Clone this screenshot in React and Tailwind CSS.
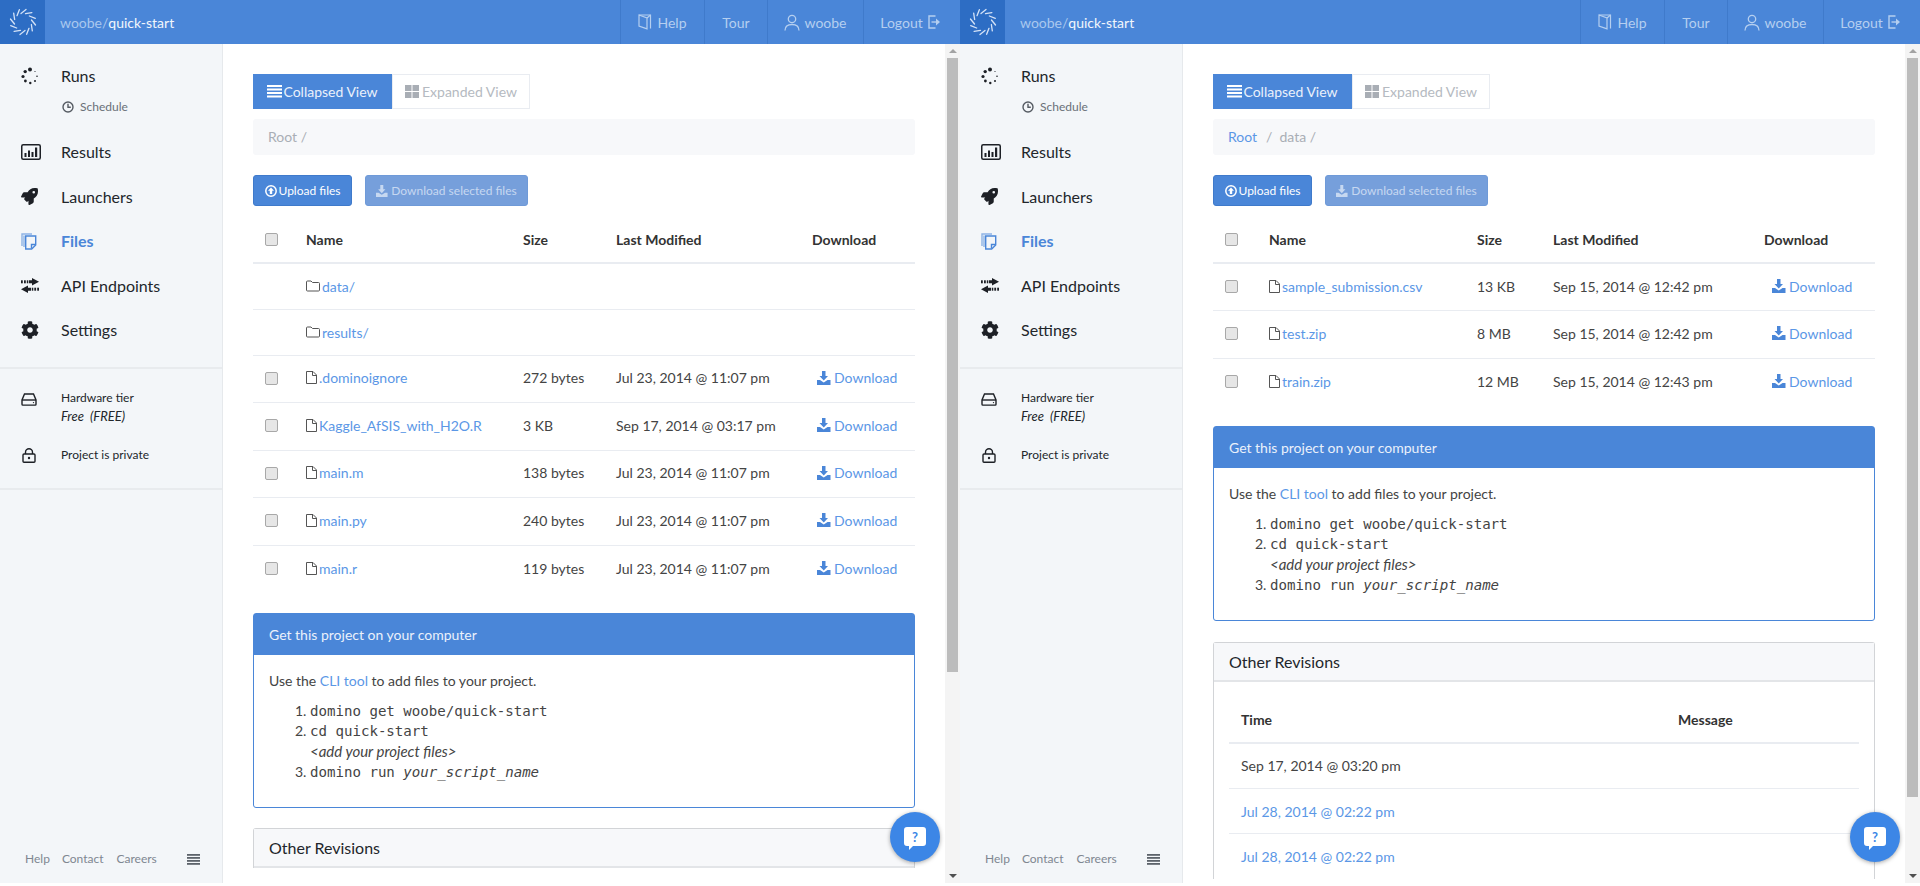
import React from "react";
import { FaRocket, FaCog } from "react-icons/fa";

const Logo = () => (
  <svg width="30" height="30" viewBox="-15 -15 30 30">
    {Array.from({ length: 12 }).map((_, i) => (
      <line key={i} x1="-2" y1="-8.5" x2="3" y2="-12.5" stroke="#d5e3f7" strokeWidth="1.3" strokeLinecap="round" transform={`rotate(${i * 30})`} />
    ))}
  </svg>
);

const Spinner = () => (
  <svg width="18" height="18" viewBox="-9 -9 18 18" fill="#1d2026">
    <circle cx="0" cy="-6.5" r="2" />
    <circle cx="-4.8" cy="-4.4" r="1.7" />
    <circle cx="-7" cy="0.5" r="1.6" />
    <circle cx="-4.6" cy="5" r="1.4" />
    <circle cx="0.3" cy="7" r="1.2" />
    <circle cx="5" cy="5" r="1" />
    <circle cx="7" cy="0.3" r="0.8" />
    <circle cx="5" cy="-4.5" r="0.6" />
  </svg>
);

const Chart = () => (
  <svg width="20" height="16" viewBox="0 0 20 16">
    <rect x="0.75" y="0.75" width="18.5" height="14.5" rx="1.5" fill="none" stroke="#1d2026" strokeWidth="1.5" />
    <rect x="3.5" y="9" width="2" height="4" fill="#1d2026" />
    <rect x="7" y="6.5" width="2" height="6.5" fill="#1d2026" />
    <rect x="10.5" y="8" width="2" height="5" fill="#1d2026" />
    <rect x="14" y="3.5" width="2.2" height="9.5" fill="#1d2026" />
  </svg>
);

const FilesIcon = () => (
  <svg width="16" height="17" viewBox="0 0 16 17" fill="none" stroke="#4a86d8" strokeWidth="1.4">
    <path d="M1 13V1h10" opacity="0.6" />
    <path d="M3 14V2.5" opacity="0.6" />
    <path d="M4.7 3h10v9l-4 4h-6z" />
    <path d="M10.5 15.5V11.5h4" />
  </svg>
);

const Exchange = () => (
  <svg width="18" height="15" viewBox="0 0 18 15" fill="#1d2026">
    <path d="M11 0 18 3.800l-7 3.800V5.300H8V2.300h3z" />
    <path d="M7 7.400 0 11.200l7 3.800v-2.300h3v-3H7z" />
    <rect x="0" y="2.300" width="1.800" height="3" />
    <rect x="3" y="2.300" width="1.800" height="3" />
    <rect x="5.800" y="2.300" width="1.500" height="3" />
    <rect x="10.800" y="9.700" width="1.500" height="3" />
    <rect x="13.300" y="9.700" width="1.800" height="3" />
    <rect x="16.200" y="9.700" width="1.800" height="3" />
  </svg>
);

const Hdd = () => (
  <svg width="16" height="13" viewBox="0 0 16 13" fill="none" stroke="#1d2026" strokeWidth="1.4">
    <path d="M3.500 1h9l2.500 6v4.300a.8.8 0 0 1-.8.8H1.800a.8.8 0 0 1-.8-.8V7z" />
    <path d="M1 7h14" />
    <circle cx="12.500" cy="9.600" r="0.700" fill="#1d2026" stroke="none" />
  </svg>
);

const Lock = () => (
  <svg width="14" height="15" viewBox="0 0 14 15" fill="none" stroke="#1d2026" strokeWidth="1.4">
    <rect x="1" y="6" width="12" height="8.300" rx="1" />
    <path d="M3.500 6V4.200a3.500 3.500 0 0 1 7 0V6" />
    <circle cx="7" cy="10" r="1.200" fill="#1d2026" stroke="none" />
  </svg>
);

const Clock = () => (
  <svg width="12" height="12" viewBox="0 0 12 12" fill="none" stroke="#555b63" strokeWidth="1.400">
    <circle cx="6" cy="6" r="5" />
    <path d="M6 2.800V6.300H8.800" />
  </svg>
);

const FileIcon = () => (
  <svg width="11" height="13" viewBox="0 0 11 13" fill="none" stroke="#555" strokeWidth="1" className="shrink-0">
    <path d="M.5.500h6.500l3.500 3.500v8.500h-10z" />
    <path d="M6.500.500v4h4" />
  </svg>
);

const FolderIcon = () => (
  <svg width="14" height="12" viewBox="0 0 14 12" fill="none" stroke="#555" strokeWidth="1" className="shrink-0">
    <path d="M1.500 1h3.500l1.500 1.500h6a1 1 0 0 1 1 1V10a1 1 0 0 1-1 1h-11a1 1 0 0 1-1-1V2a1 1 0 0 1 1-1z" />
  </svg>
);

const Tray = ({ color = "#4a86d8", w = 14 }) => (
  <svg width={w} height={w} viewBox="0 0 14 14" fill={color}>
    <path d="M5 0h3.500v5H11L6.750 9.500 2.500 5H5z" />
    <path d="M0 9h3l3.750 2.500L10.500 9H13.500v5H0z" />
  </svg>
);

const Upload = () => (
  <svg width="12" height="12" viewBox="0 0 12 12">
    <circle cx="6" cy="6" r="5.200" fill="none" stroke="#fff" strokeWidth="1.500" />
    <path d="M6 2.500 9 5.800H7.200V9H4.800V5.800H3z" fill="#fff" />
  </svg>
);

const ListIcon = () => (
  <svg width="15" height="13" viewBox="0 0 15 13" fill="#fff">
    <rect y="0" width="15" height="2" />
    <rect y="3.500" width="15" height="2" />
    <rect y="7" width="15" height="2" />
    <rect y="10.500" width="15" height="2" />
  </svg>
);

const GridIcon = () => (
  <svg width="14" height="13" viewBox="0 0 14 13" fill="#a9aeb5">
    <rect width="6.500" height="6" />
    <rect x="7.500" width="6.500" height="6" />
    <rect y="7" width="6.500" height="6" />
    <rect x="7.500" y="7" width="6.500" height="6" />
  </svg>
);

const Book = () => (
  <svg width="14" height="16" viewBox="0 0 14 16" fill="none" stroke="#b5cff0" strokeWidth="1.200">
    <path d="M1 1h11.500v13.500" />
    <path d="M1 1v11l8 2.800V4z" />
    <path d="M9 4l3.500-3" />
  </svg>
);

const User = () => (
  <svg width="16" height="17" viewBox="0 0 16 17" fill="none" stroke="#b5cff0" strokeWidth="1.300">
    <circle cx="8" cy="5" r="3.700" />
    <path d="M1 16.500c0-4 3-6 7-6s7 2 7 6" />
  </svg>
);

const LogoutIcon = () => (
  <svg width="13" height="14" viewBox="0 0 13 14" fill="none" stroke="#b5cff0" strokeWidth="1.400">
    <path d="M7.500 1H1v12h6.500" />
    <path d="M3.500 7h6" />
    <path d="M8 3.500 12 7l-4 3.500z" fill="#b5cff0" stroke="none" />
  </svg>
);

const Chat = () => (
  <svg width="22" height="23" viewBox="0 0 22 23">
    <path d="M3 0h16a3 3 0 0 1 3 3v13a3 3 0 0 1-3 3H9l-4 4v-4H3a3 3 0 0 1-3-3V3a3 3 0 0 1 3-3z" fill="#fff" />
    <text x="11" y="14.500" textAnchor="middle" fontSize="13" fontWeight="700" fill="#3c86e6" fontFamily="Lato">?</text>
  </svg>
);

const MenuIcon = () => (
  <svg width="13" height="11" viewBox="0 0 13 11" fill="#5c636b">
    <rect width="13" height="1.800" />
    <rect y="3" width="13" height="1.800" />
    <rect y="6" width="13" height="1.800" />
    <rect y="9" width="13" height="1.800" />
  </svg>
);

function Header() {
  return (
    <div className="h-[44px] shrink-0 bg-[#4a86d8] flex items-stretch text-[14px] text-[#b5cff0]">
      <div className="w-[45px] bg-[#2d6dc4] flex items-center justify-center"><Logo /></div>
      <div className="flex-1 pl-[15px] flex items-center text-[14px]">
        <span className="text-[#a9c8ee]">woobe/</span><span className="text-[#f2f6fc]">quick-start</span>
      </div>
      <div className="h-full w-[1px] bg-[#3f7acb]" />
      <div className="w-[83px] flex items-center justify-center gap-[5px]"><Book />Help</div>
      <div className="h-full w-[1px] bg-[#3f7acb]" />
      <div className="w-[62px] flex items-center justify-center">Tour</div>
      <div className="h-full w-[1px] bg-[#3f7acb]" />
      <div className="w-[95px] flex items-center justify-center gap-[4px]"><User />woobe</div>
      <div className="h-full w-[1px] bg-[#3f7acb]" />
      <div className="w-[96px] flex items-center justify-center gap-[5px] pr-[3px]">Logout<LogoutIcon /></div>
    </div>
  );
}

function NavItem({ icon, label, active, className = "" }) {
  return (
    <div className={`flex items-center h-[44.500px] ${className}`}>
      <div className="w-[61px] pl-[21px] flex items-center">{icon}</div>
      <span className={active ? "text-[16px] font-bold text-[#4a86d8]" : "text-[16px] text-[#22262b]"}>{label}</span>
    </div>
  );
}

function Sidebar() {
  return (
    <div className="w-[223px] shrink-0 bg-[#f3f6f9] border-r border-[#e6e9ec] flex flex-col">
      <div className="pt-[9.500px] border-b-2 border-[#e8ebee] h-[325px]">
        <NavItem icon={<Spinner />} label="Runs" />
        <div className="flex items-center h-[18px] pl-[62px] gap-[6px] text-[12px] text-[#6a7078]"><Clock />Schedule</div>
        <div className="h-[14px]" />
        <NavItem icon={<Chart />} label="Results" />
        <NavItem icon={<FaRocket size={17} color="#1d2026" />} label="Launchers" />
        <NavItem icon={<FilesIcon />} label="Files" active />
        <NavItem icon={<Exchange />} label="API Endpoints" />
        <NavItem icon={<FaCog size={18} color="#1d2026" />} label="Settings" />
      </div>
      <div className="h-[121px] border-b-2 border-[#e8ebee] pt-[20px] text-[12px] text-[#22262b]">
        <div className="flex">
          <div className="w-[61px] pl-[21px] pt-[4px]"><Hdd /></div>
          <div className="leading-[18px]">Hardware tier<br /><i className="text-[13px]">Free&nbsp; (FREE)</i></div>
        </div>
        <div className="flex mt-[20px]">
          <div className="w-[61px] pl-[22px] pt-[2px]"><Lock /></div>
          <div className="leading-[18px]">Project is private</div>
        </div>
      </div>
      <div className="flex-1 flex items-end pb-[15px] pl-[25px] text-[12px] text-[#7f8791]">
        <span>Help</span><span className="ml-[12px]">Contact</span><span className="ml-[13px]">Careers</span>
        <span className="ml-[30px] mb-[3px]"><MenuIcon /></span>
      </div>
    </div>
  );
}

function Scrollbar({ thumb }) {
  return (
    <div className="w-[15px] shrink-0 bg-[#f4f4f4] flex flex-col items-center">
      <div className="h-[14px] flex items-center justify-center w-full">
        <div className="w-0 h-0 border-x-[4px] border-x-transparent border-b-[4px] border-b-[#a3a3a3]" />
      </div>
      <div className="w-[11px] bg-[#bcbcbc]" style={{ height: thumb }} />
      <div className="flex-1" />
      <div className="h-[14px] flex items-center justify-center w-full">
        <div className="w-0 h-0 border-x-[4px] border-x-transparent border-t-[4px] border-t-[#505050]" />
      </div>
    </div>
  );
}

const Check = () => (
  <input type="checkbox" className="appearance-none block w-[13px] h-[13px] rounded-[2px] border border-[#a8a8a8] bg-[#e6e6e6]" />
);

function FileTable({ cols, rows, dlPad }) {
  return (
    <table className="w-full table-fixed border-collapse text-[14px] text-[#444]">
      <colgroup>{cols.map((c, i) => <col key={i} style={{ width: c }} />)}</colgroup>
      <thead>
        <tr className="h-[57px] border-b-2 border-[#e9ecf1] text-left text-[#333]">
          <th className="pl-[12px] pb-[16px] align-bottom font-normal"><Check /></th>
          <th className="pl-[13px] pb-[12px] align-bottom font-bold">Name</th>
          <th className="pl-[13px] pb-[12px] align-bottom font-bold">Size</th>
          <th className="pl-[13px] pb-[12px] align-bottom font-bold">Last Modified</th>
          <th className="pl-[13px] pb-[12px] align-bottom font-bold">Download</th>
        </tr>
      </thead>
      <tbody>
        {rows.map((r, i) => (
          <tr key={i} className={`${r.folder ? "h-[46px]" : "h-[47.500px]"} border-b border-[#e9ecf1] last:border-b-0`}>
            <td className={r.folder ? "pl-[12px]" : "pl-[12px] pb-[1px]"}>{!r.folder && <Check />}</td>
            <td className={r.folder ? "pl-[13px]" : "pl-[13px] pb-[2px]"}>
              <span className="flex items-center gap-[2px] text-[#5b97e6]">{r.folder ? <FolderIcon /> : <FileIcon />}<span className="whitespace-nowrap">{r.name}</span></span>
            </td>
            <td className="pl-[13px] pb-[2px] whitespace-nowrap">{r.size}</td>
            <td className="pl-[13px] pb-[2px] whitespace-nowrap">{r.date}</td>
            <td className="pb-[2px]" style={{ paddingLeft: dlPad }}>
              {!r.folder && <span className="flex items-center gap-[3px] text-[#5b97e6]"><Tray />Download</span>}
            </td>
          </tr>
        ))}
      </tbody>
    </table>
  );
}

function Toolbar({ crumbs }) {
  return (
    <>
      <div className="flex h-[35px] text-[14px]">
        <div className="w-[139px] bg-[#4a86d8] text-[#eaf1fb] flex items-center justify-center gap-[1px]"><ListIcon />Collapsed View</div>
        <div className="w-[138px] border border-[#e9ecf1] text-[#b5bac1] flex items-center justify-center gap-[3px]"><GridIcon />Expanded View</div>
      </div>
      <div className="mt-[10px] h-[36px] bg-[#f7f8fa] rounded-[3px] pl-[15px] pb-[1px] flex items-center text-[14px] text-[#a9aeb5]">{crumbs}</div>
      <div className="mt-[20px] flex gap-[13px] text-[12px]">
        <div className="w-[99px] h-[31px] rounded-[3px] bg-[#4a86d8] border border-[#3f7acb] text-white flex items-center justify-center gap-[2px]"><Upload />Upload files</div>
        <div className="w-[163px] h-[31px] rounded-[3px] bg-[#769fdb] border border-[#6f9ad8] text-[#c6d8f1] flex items-center justify-center gap-[3px]"><Tray color="#c6d8f1" w={12} />Download selected files</div>
      </div>
    </>
  );
}

function CliPanel() {
  return (
    <div className="mt-[20px] border border-[#4a86d8] rounded-[3px] h-[195px] text-[14px] text-[#444]">
      <div className="h-[41px] bg-[#4a86d8] text-[#eaf1fb] pl-[15px] flex items-center">Get this project on your computer</div>
      <div className="pl-[15px] pt-[16px]">
        <p className="leading-[20px]">Use the <span className="text-[#5b97e6]">CLI tool</span> to add files to your project.</p>
        <ol className="list-decimal pl-[41px] mt-[10px] leading-[20.300px]">
          <li><code className="font-['DejaVu_Sans_Mono',monospace] text-[14.100px]">domino get woobe/quick-start</code></li>
          <li><code className="font-['DejaVu_Sans_Mono',monospace] text-[14.100px]">cd quick-start</code><br /><i className="text-[15px] leading-[20px]">&lt;add your project files&gt;</i></li>
          <li><code className="font-['DejaVu_Sans_Mono',monospace] text-[14.100px]">domino run <i>your_script_name</i></code></li>
        </ol>
      </div>
    </div>
  );
}

function Pane({ thumb, children }) {
  return (
    <div className="relative w-[960px] h-[883px] flex flex-col overflow-hidden">
      <Header />
      <div className="flex-1 flex min-h-0">
        <Sidebar />
        <div className="flex-1 min-w-0 overflow-hidden px-[30px] pt-[30px]">{children}</div>
        <Scrollbar thumb={thumb} />
      </div>
      <div className="absolute left-[890px] top-[812px] w-[50px] h-[50px] rounded-full bg-[#3c86e6] shadow-[0_1px_4px_rgba(0,0,0,0.35)] flex items-center justify-center pt-[2px]"><Chat /></div>
    </div>
  );
}

const RevHead = () => (
  <div className="border border-[#d2d4d7] border-b-0 rounded-t-[3px] mt-[20px] text-[16px]">
    <div className="h-[39px] bg-[#f7f8fa] border-b-2 border-[#e3e5e8] pl-[15px] pt-[2px] flex items-center text-[#22262b]">Other Revisions</div>
  </div>
);

export default function App() {
  const left = [
    { folder: true, name: "data/" },
    { folder: true, name: "results/" },
    { name: ".dominoignore", size: "272 bytes", date: "Jul 23, 2014 @ 11:07 pm" },
    { name: "Kaggle_AfSIS_with_H2O.R", size: "3 KB", date: "Sep 17, 2014 @ 03:17 pm" },
    { name: "main.m", size: "138 bytes", date: "Jul 23, 2014 @ 11:07 pm" },
    { name: "main.py", size: "240 bytes", date: "Jul 23, 2014 @ 11:07 pm" },
    { name: "main.r", size: "119 bytes", date: "Jul 23, 2014 @ 11:07 pm" },
  ];
  const right = [
    { name: "sample_submission.csv", size: "13 KB", date: "Sep 15, 2014 @ 12:42 pm" },
    { name: "test.zip", size: "8 MB", date: "Sep 15, 2014 @ 12:42 pm" },
    { name: "train.zip", size: "12 MB", date: "Sep 15, 2014 @ 12:43 pm" },
  ];
  return (
    <div className="flex w-[1920px] h-[886px] bg-white overflow-hidden font-['Lato',sans-serif]">
      <Pane thumb={614}>
        <Toolbar crumbs="Root /" />
        <FileTable cols={[40, 217, 93, 196, 116]} rows={left} dlPad={18} />
        <CliPanel />
        <RevHead />
      </Pane>
      <Pane thumb={739}>
        <Toolbar crumbs={<><span className="text-[#5b97e6]">Root</span><span className="ml-[9px] mr-[7px]">/</span>data /</>} />
        <FileTable cols={[43, 208, 76, 211, 124]} rows={right} dlPad={21} />
        <CliPanel />
        <div className="mt-[21px] border border-[#d2d4d7] border-b-0 rounded-t-[3px]">
          <div className="h-[39px] bg-[#f7f8fa] border-b-2 border-[#e3e5e8] pl-[15px] pt-[2px] flex items-center text-[16px] text-[#22262b]">Other Revisions</div>
          <div className="px-[15px] pt-[15px]">
            <table className="w-full table-fixed border-collapse text-[14px] text-[#444]">
              <colgroup><col style={{ width: 449 }} /><col /></colgroup>
              <thead>
                <tr className="h-[46px] border-b-2 border-[#e9ecf1] text-left text-[#333]">
                  <th className="pl-[12px] font-bold">Time</th>
                  <th className="pl-[0px] font-bold">Message</th>
                </tr>
              </thead>
              <tbody>
                <tr className="h-[46px] border-b border-[#e9ecf1]"><td className="pl-[12px]">Sep 17, 2014 @ 03:20 pm</td><td /></tr>
                <tr className="h-[45px] border-b border-[#e9ecf1]"><td className="pl-[12px] text-[#5b97e6]">Jul 28, 2014 @ 02:22 pm</td><td /></tr>
                <tr className="h-[45px]"><td className="pl-[12px] text-[#5b97e6]">Jul 28, 2014 @ 02:22 pm</td><td /></tr>
              </tbody>
            </table>
          </div>
        </div>
      </Pane>
    </div>
  );
}
